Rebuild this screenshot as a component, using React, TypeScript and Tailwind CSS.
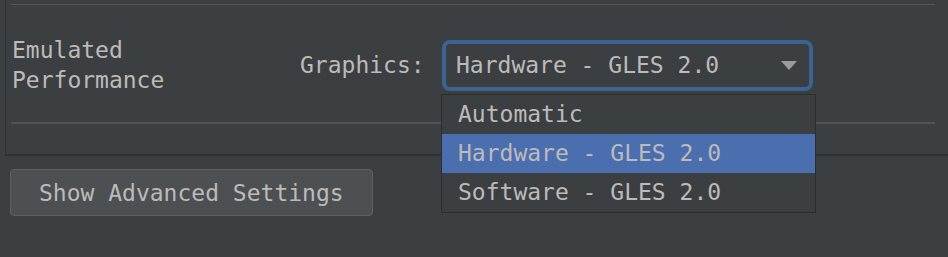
import { FC } from 'react';

const mono = { fontFamily: '"DejaVu Sans Mono", "Liberation Mono", monospace' };

const options = ['Automatic', 'Hardware - GLES 2.0', 'Software - GLES 2.0'];

const GraphicsCombo: FC<{ value: string }> = ({ value }) => (
  <div className="relative">
    <div className="flex items-center justify-between w-[371px] h-[51px] border-4 border-[#3b6490] rounded-[8px] bg-[#3c3f41] pl-[10px] pr-[12px]">
      <span className="leading-[30px]">{value}</span>
      <svg width="16" height="9" viewBox="0 0 16 9">
        <path d="M0 0 H16 L8 9 Z" fill="#9a9da0" />
      </svg>
    </div>

    {/* popup list */}
    <div className="absolute left-[-1px] top-[54px] w-[375px] border border-[#2b2d2f] bg-[#3c3f41] z-10">
      {options.map((o) => (
        <div
          key={o}
          className={`h-[39px] flex items-center pl-[16px] ${o === value ? 'bg-[#4b6eaf]' : ''}`}
        >
          {o}
        </div>
      ))}
    </div>
  </div>
);

export default function App() {
  return (
    <div
      className="w-[948px] h-[257px] bg-[#3c3f41] text-[#bbbbbb] text-[23px] overflow-hidden"
      style={mono}
    >
      {/* Emulated performance panel */}
      <div className="ml-[5px] h-[156px] border-l border-b-2 border-[#2f3133] pl-[5px] pt-[4px]">
        <div className="w-[924px] h-[1px] bg-[#555759]" />

        <div className="flex items-center mt-[30px] pl-[1px]">
          <div className="w-[288px] leading-[30px]">
            Emulated
            <br />
            Performance
          </div>
          <div className="w-[142px] leading-[30px]">Graphics:</div>
          <GraphicsCombo value="Hardware - GLES 2.0" />
        </div>

        <div className="w-[924px] h-[2px] bg-[#515355] mt-[27px]" />
      </div>

      <button className="mt-[13px] ml-[10px] w-[363px] h-[47px] bg-[#4c5052] border border-[#5e6163] rounded-[4px] text-left pl-[28px] leading-[30px]">
        Show Advanced Settings
      </button>
    </div>
  );
}
